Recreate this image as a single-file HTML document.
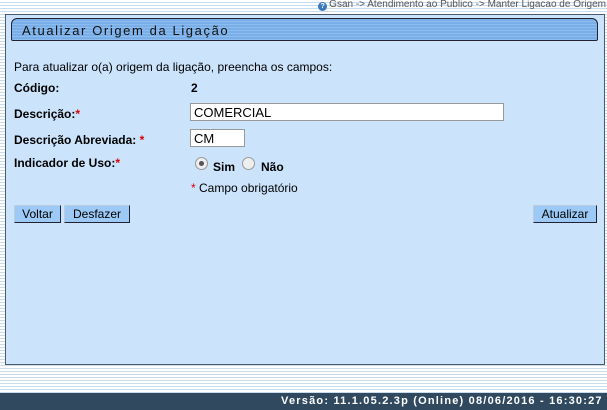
<!DOCTYPE html>
<html><head><meta charset="utf-8"><style>
body{margin:0;width:607px;height:410px;overflow:hidden;position:relative;font-family:"Liberation Sans",Arial,sans-serif;
background:repeating-linear-gradient(#fff 0 2px,#c9dcee 2px 3px);}
.crumb{position:absolute;right:1px;top:-1px;font-size:10px;color:#555;line-height:11px}
.crumb i{display:inline-block;width:9px;height:9px;border-radius:50%;background:#3a78c0;vertical-align:-1px;margin-right:2px;color:#fff;font-size:7px;text-align:center;line-height:9px;font-style:normal;font-weight:bold}
.panel{position:absolute;left:5px;top:14px;width:598px;height:349px;background:#cbe3fb;border:1px solid #4a5a6a}
.hdr{position:absolute;left:5px;top:3px;width:585px;height:21px;border:1px solid #223;border-radius:6px 6px 2px 2px;
background:repeating-linear-gradient(#7aaee6 0 2px,#8cbcf0 2px 3px);}
.hdr span{position:absolute;left:10px;top:4px;font-size:13px;letter-spacing:1.6px;color:#111}
.t{position:absolute;font-size:12px;color:#000}
.b{font-weight:bold}
.r{color:#d00}
.inp{position:absolute;height:18px;border:1px solid #999;background:#fff;font-size:13px;line-height:18px;padding-left:3px;box-sizing:border-box}
.btn{position:absolute;height:18px;background:#9cc9f5;border:1px solid #223;border-top-color:#bcd;border-left-color:#bcd;font-size:12px;line-height:16px;text-align:center;box-sizing:border-box}
.rad{position:absolute;width:13px;height:13px;border-radius:50%;border:1px solid #999;background:#eee;box-sizing:border-box}
.foot{position:absolute;left:0;top:393px;width:607px;height:17px;background:#30495f;color:#fff;font-weight:bold;font-size:11px;letter-spacing:1.2px;text-align:right;line-height:17px}
</style></head><body>
<div class="crumb"><i>?</i>Gsan -&gt; Atendimento ao Publico -&gt; Manter Ligacao de Origem</div>
<div class="panel">
<div class="hdr"><span>Atualizar Origem da Ligação</span></div>
</div>
<div class="t" style="left:14px;top:60px">Para atualizar o(a) origem da ligação, preencha os campos:</div>
<div class="t b" style="left:14px;top:81px">Código:</div>
<div class="t b" style="left:191px;top:81px">2</div>
<div class="t b" style="left:14px;top:107px">Descrição:<span class="r">*</span></div>
<div class="inp" style="left:190px;top:103px;width:314px">COMERCIAL</div>
<div class="t b" style="left:14px;top:133px">Descrição Abreviada: <span class="r">*</span></div>
<div class="inp" style="left:190px;top:129px;width:55px">CM</div>
<div class="t b" style="left:14px;top:156px">Indicador de Uso:<span class="r">*</span></div>
<div class="rad" style="left:195px;top:157px"><div style="position:absolute;left:3px;top:3px;width:5px;height:5px;border-radius:50%;background:#555"></div></div>
<div class="t b" style="left:213px;top:160px">Sim</div>
<div class="rad" style="left:242px;top:157px"></div>
<div class="t b" style="left:261px;top:160px">Não</div>
<div class="t" style="left:191px;top:181px"><span class="r">*</span> Campo obrigatório</div>
<div class="btn" style="left:14px;top:205px;width:47px">Voltar</div>
<div class="btn" style="left:64px;top:205px;width:66px">Desfazer</div>
<div class="btn" style="left:533px;top:205px;width:64px">Atualizar</div>
<div class="foot">Versão: 11.1.05.2.3p (Online) 08/06/2016 - 16:30:27&nbsp;</div>
</body></html>
